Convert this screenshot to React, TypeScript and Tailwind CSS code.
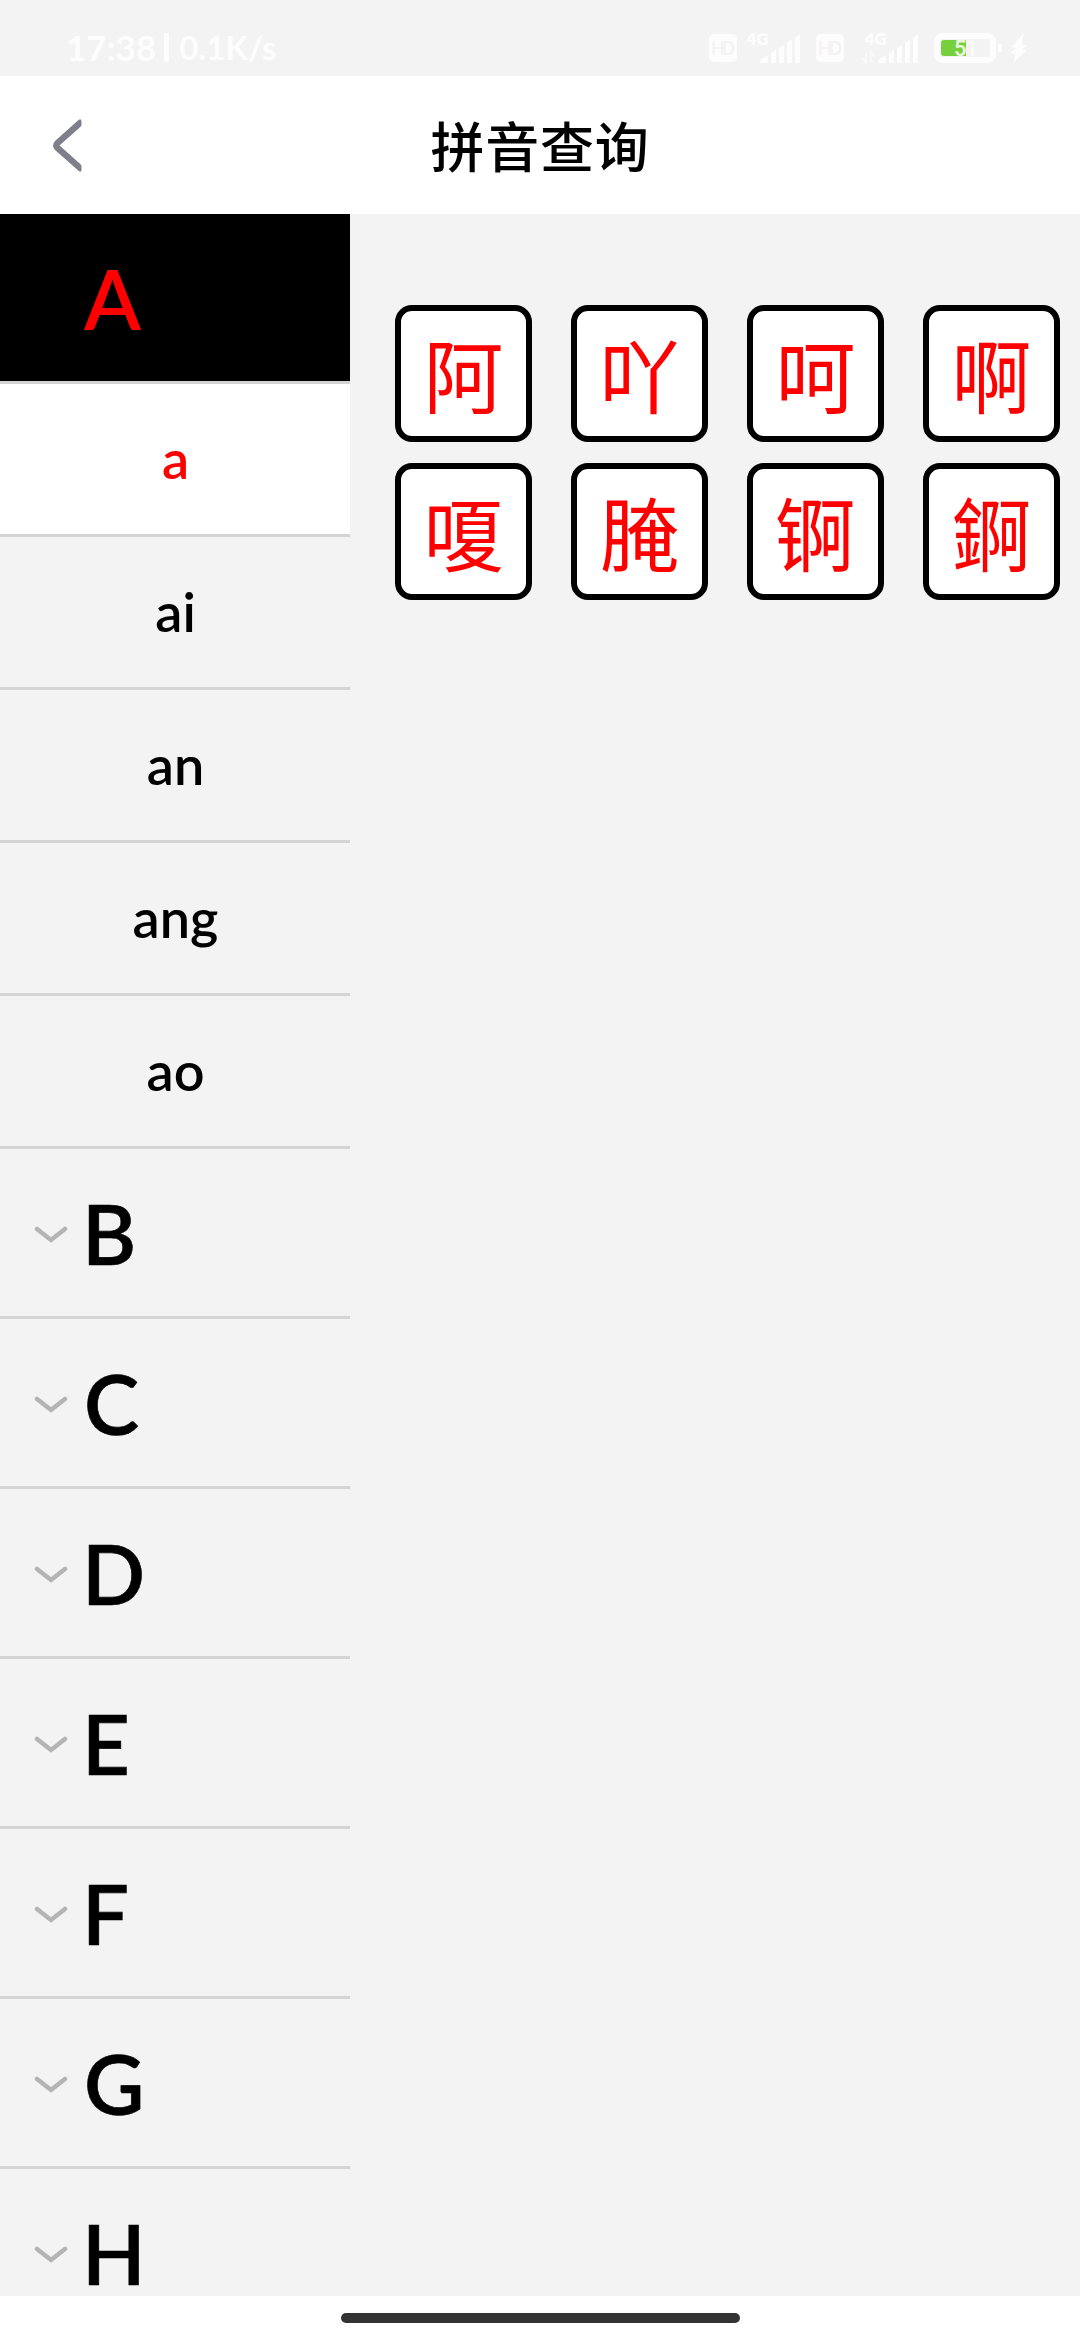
import React from "react";

const syllables = ["a", "ai", "an", "ang", "ao"];
const letters = ["B", "C", "D", "E", "F", "G", "H"];
const characters = ["阿", "吖", "呵", "啊", "嗄", "腌", "锕", "錒"];

function HdBadge() {
  return (
    <svg width="28" height="28" viewBox="0 0 28 28" className="shrink-0">
      <rect width="28" height="28" rx="5" fill="#fdfdfd" />
      <text x="14" y="21" textAnchor="middle" fontSize="18" fontWeight="600" fill="#f3f3f3" textLength="24" className="font-['Inter']">
        HD
      </text>
    </svg>
  );
}

function Signal({ data = false }: { data?: boolean }) {
  return (
    <svg width="56" height="32" viewBox="0 0 56 32" className="shrink-0 overflow-visible">
      <text x="2.500" y="12.500" fontSize="16.500" fontWeight="800" fill="#fdfdfd" textLength="22" className="font-['Lato']">
        4G
      </text>
      {data && (
        <path d="M4 19.500v11.500l-3.500-5M8.500 31V19.500l3.500 5" fill="none" stroke="#f9f9f9" strokeWidth="2" />
      )}
      <g fill="#fdfdfd">
        <path d="M16 29q0-2 8-5.500V31h-7q-1 0-1-1z" />
        <path d="M27 21l5-3v12q0 1-1 1h-3q-1 0-1-1z" />
        <path d="M35 16l5-3v17q0 1-1 1h-3q-1 0-1-1z" />
        <path d="M43 11l5-4v23q0 1-1 1h-3q-1 0-1-1z" />
        <path d="M51 6l5-4v28q0 1-1 1h-3q-1 0-1-1z" />
      </g>
    </svg>
  );
}

function Battery() {
  return (
    <svg width="94" height="32" viewBox="0 0 94 32" className="shrink-0">
      <rect x="3" y="4" width="56" height="24" rx="5.500" fill="none" stroke="#fdfdfd" strokeWidth="6" />
      <rect x="6.500" y="7.500" width="49" height="17" rx="3" fill="#f3f3f3" />
      <path d="M10 8h22v16H10q-3 0-3-3V11q0-3 3-3z" fill="#76cf3d" />
      <text x="32" y="24" textAnchor="middle" fontSize="22" fontWeight="600" fill="#fdfdfd" fillOpacity="0.85" textLength="24" className="font-['Roboto']">
        51
      </text>
      <rect x="64" y="11.500" width="4" height="9" rx="2" fill="#fdfdfd" />
      <path d="M89.700 1L77.700 14.700L82.700 16L76.300 20.700L81.700 22.700L78.700 31L92.700 18.700L87.700 17.300L93.500 14L88 12Z" fill="#fdfdfd" />
    </svg>
  );
}

function StatusBar() {
  return (
    <div className="flex h-[76px] shrink-0 items-center bg-[#f3f3f3] pr-[52px] pl-[66px]">
      <div className="flex items-center pt-[18px] font-['Lato'] font-bold whitespace-pre text-[#fdfdfd]">
        <span className="text-[35px] leading-[46px]">17:38</span>
        <span className="mt-px ml-[8px] h-[29px] w-[5px] rounded-[1px] bg-[#fdfdfd]" />
        <span className="ml-[10px] text-[33px] leading-[46px]">0.1K/s</span>
      </div>
      <div className="ml-auto flex items-center pt-[20px]">
        <HdBadge />
        <div className="ml-[7px] flex">
          <Signal />
        </div>
        <div className="ml-[16px] flex">
          <HdBadge />
        </div>
        <div className="ml-[18px] flex">
          <Signal data />
        </div>
        <div className="ml-[16px] flex">
          <Battery />
        </div>
      </div>
    </div>
  );
}

function Header() {
  return (
    <header className="grid h-[138px] shrink-0 grid-cols-[1fr_auto_1fr] items-center bg-white">
      <svg width="34" height="56" viewBox="0 0 34 56" className="ml-[50px]">
        <path
          d="M28.500 3Q31.500 1 31.500 5V7.500Q31.500 9 30 10.300L9.500 28.500L30 46.700Q31.500 48 31.500 49.500V53Q31 56 28.500 53.700L5 33Q1.200 28.500 5 24Z"
          fill="#7f7f8c"
        />
      </svg>
      <h1 className="pb-px font-['Noto_Sans_CJK_SC',sans-serif] text-[54px] leading-[80px] font-medium tracking-[0.7px] text-black">
        拼音查询
      </h1>
    </header>
  );
}

function Chevron() {
  return (
    <svg width="34" height="20" viewBox="0 0 34 20" className="mt-[5px] ml-[34px] shrink-0">
      <path d="M3 4L17 15L31 4" fill="none" stroke="#b4b4b4" strokeWidth="4.500" strokeLinecap="round" />
    </svg>
  );
}

function Sidebar() {
  return (
    <nav className="flex w-[350px] shrink-0 flex-col overflow-hidden font-['Lato'] font-semibold text-black">
      <div className="flex h-[170px] shrink-0 items-center border-b-[3px] border-[#d4d4d4] bg-black pl-[84px] text-[83px] leading-[80px] text-[#ff0000]">
        A
      </div>
      {syllables.map((s) => (
        <div
          key={s}
          className={
            "flex h-[153px] shrink-0 items-center justify-center border-b-[3px] border-[#d4d4d4] pl-px text-[54px] leading-[66px] " +
            (s === "a" ? "bg-white text-[#ff0000]" : "")
          }
        >
          {s}
        </div>
      ))}
      {letters.map((l) => (
        <div key={l} className="flex h-[170px] shrink-0 items-center border-b-[3px] border-[#d4d4d4]">
          <Chevron />
          <span
            className={
              (l === "C" || l === "G" ? "ml-[16px]" : "ml-[14px]") +
              " text-[83px] leading-[80px] [-webkit-text-stroke:0.6px_#000]"
            }
          >
            {l}
          </span>
        </div>
      ))}
    </nav>
  );
}

export default function App() {
  return (
    <div className="flex h-[2340px] w-[1080px] flex-col overflow-hidden bg-[#f3f3f3]">
      <StatusBar />
      <Header />
      <div className="flex h-[2082px] shrink-0 overflow-hidden">
        <Sidebar />
        <main className="flex-1 pt-[91px] pl-[45px]">
          <div className="grid grid-cols-[repeat(4,137px)] gap-x-[39px] gap-y-[21px]">
            {characters.map((c) => (
              <div
                key={c}
                className="flex h-[137px] items-center justify-center rounded-[17px] border-[6px] border-black bg-white pb-[4px] font-['Noto_Sans_CJK_SC',sans-serif] text-[80px] leading-[100px] text-[#ff0000]"
              >
                {c}
              </div>
            ))}
          </div>
        </main>
      </div>
      <footer className="flex h-[44px] shrink-0 justify-center bg-white pt-[17px]">
        <div className="h-[10px] w-[399px] rounded-full bg-[#333333]" />
      </footer>
    </div>
  );
}
